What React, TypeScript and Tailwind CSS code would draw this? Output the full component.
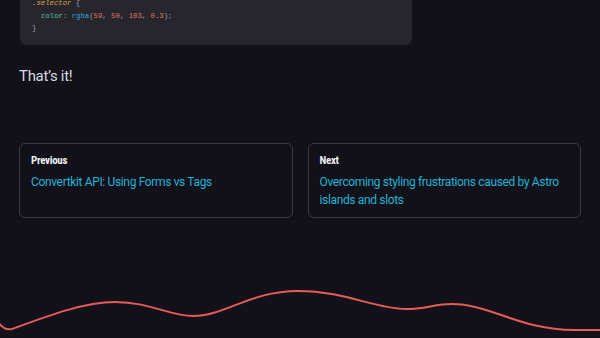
import React from 'react';

const Code: React.FC = () => (
  <div className="mx-[20px] w-[392px] -mt-[15px] rounded-md bg-[#27262c] pl-[12px] pt-[12px] pb-[10px] font-['Liberation_Mono',monospace] text-[7.3px] leading-[12.5px] text-[#a0a0aa]">
    <div>
      <span className="italic text-[#d9a04a]">.selector</span> {'{'}
    </div>
    <div className="pl-[9px]">
      <span className="text-[#4fc1a6]">color</span>: <span className="text-[#2aa6d6]">rgba</span>(
      <span className="text-[#e0735f]">59</span>, <span className="text-[#e0735f]">50</span>,{' '}
      <span className="text-[#e0735f]">103</span>, <span className="text-[#e0735f]">0.3</span>);
    </div>
    <div>{'}'}</div>
  </div>
);

const NavCard: React.FC<{ label: string; title: string }> = ({ label, title }) => (
  <a className="flex h-[75px] flex-col rounded-md border border-[#3b3a44] px-[11px] pt-[10px]">
    <span className="font-['Roboto_Condensed','Roboto',sans-serif] text-[11px] font-bold leading-[14px] tracking-[-0.3px] text-[#eeeef4]">
      {label}
    </span>
    <span className="mt-[5px] font-['Roboto',sans-serif] text-[12px] leading-[18px] tracking-[-0.35px] text-[#1fb3d6]">
      {title}
    </span>
  </a>
);

export default function App() {
  return (
    <div className="flex h-[338px] w-[600px] flex-col overflow-hidden bg-[#121119]">
      <Code />
      <p className="ml-[19px] mt-[21px] font-['Roboto',sans-serif] text-[15px] leading-[20px] tracking-[-0.3px] text-[#d8d8e0]">
        That’s it!
      </p>
      <div className="mx-[19px] mt-[57px] grid grid-cols-2 gap-[15px]">
        <NavCard label="Previous" title="Convertkit API: Using Forms vs Tags" />
        <NavCard label="Next" title="Overcoming styling frustrations caused by Astro islands and slots" />
      </div>
      <svg className="mt-auto block" width="600" height="60" viewBox="0 278 600 60">
        <path
          d="M-2 322 Q4 331 12 329 C50 315 85 302 115 302 C150 302 170 316 193 316 C225 316 250 291 298 291 C345 291 375 309 406 309 C425 309 435 304 452 304 C490 304 520 330 574 330 L602 330"
          fill="none"
          stroke="#e85a5a"
          strokeWidth="2"
        />
      </svg>
    </div>
  );
}
